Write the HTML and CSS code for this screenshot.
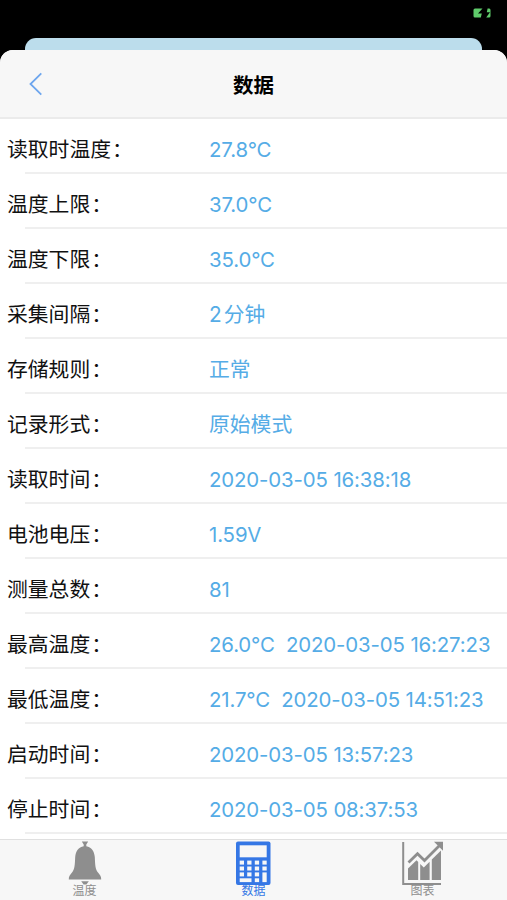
FILE: index.html
```html
<!DOCTYPE html>
<html lang="zh-CN">
<head>
  <meta charset="UTF-8">
  <meta name="viewport" content="width=device-width, initial-scale=1.0">
  <title>数据</title>
  <link rel="stylesheet" href="styles.css">
</head>
<body>
  <!-- Status Bar -->
  <div class="status-bar">
    <svg class="battery" width="18" height="10" viewBox="0 0 18 10" fill="#5fcb6b">
      <path d="M2 0.5H9.5L5 5.6H8.8L7.8 9.5H2Q0.5 9.5 0.5 8V2Q0.5 0.5 2 0.5Z"/>
      <path d="M14.6 0.5H16.2Q17.5 0.5 17.5 2V8Q17.5 9.5 16 9.5H13.2L17 4.2H13.8Z"/>
    </svg>
  </div>

  <!-- Page behind the sheet -->
  <div class="back-sheet"></div>

  <div class="sheet">
    <div class="header">
      <a class="back" href="#">
        <svg width="14" height="24" viewBox="0 0 14 24">
          <path d="M12.3 1.3L1.5 12L12.3 22.7" fill="none" stroke="#6ea6ee" stroke-width="1.8"/>
        </svg>
      </a>
      <h1>数据</h1>
    </div>

    <!-- Data Rows -->
    <div class="list">
      <div class="row"><span class="label">读取时温度<span class="colon">：</span></span><span class="value">27.8°C</span></div>
      <div class="row"><span class="label">温度上限<span class="colon">：</span></span><span class="value">37.0°C</span></div>
      <div class="row"><span class="label">温度下限<span class="colon">：</span></span><span class="value">35.0°C</span></div>
      <div class="row"><span class="label">采集间隔<span class="colon">：</span></span><span class="value text"><span class="count">2</span>分钟</span></div>
      <div class="row"><span class="label">存储规则<span class="colon">：</span></span><span class="value text">正常</span></div>
      <div class="row"><span class="label">记录形式<span class="colon">：</span></span><span class="value text">原始模式</span></div>
      <div class="row"><span class="label">读取时间<span class="colon">：</span></span><span class="value">2020-03-05 16:38:18</span></div>
      <div class="row"><span class="label">电池电压<span class="colon">：</span></span><span class="value">1.59V</span></div>
      <div class="row"><span class="label">测量总数<span class="colon">：</span></span><span class="value">81</span></div>
      <div class="row"><span class="label">最高温度<span class="colon">：</span></span><span class="value">26.0°C&nbsp; 2020-03-05 16:27:23</span></div>
      <div class="row"><span class="label">最低温度<span class="colon">：</span></span><span class="value">21.7°C&nbsp; 2020-03-05 14:51:23</span></div>
      <div class="row"><span class="label">启动时间<span class="colon">：</span></span><span class="value">2020-03-05 13:57:23</span></div>
      <div class="row"><span class="label">停止时间<span class="colon">：</span></span><span class="value">2020-03-05 08:37:53</span></div>
    </div>

    <!-- Tab Bar -->
    <div class="tabs">
      <a class="tab" href="#">
        <svg width="44" height="44" viewBox="0 0 44 44" fill="#8e8e8e">
          <path d="M18.8 0.5H25.2L23.3 3.5V5.2C28.5 6.2 31.3 10 31.8 16C32.2 24 32.2 28 35 31.5C37 34 38.4 35.5 38.2 38.5H5.8C5.6 35.5 7 34 9 31.5C11.8 28 11.8 24 12.2 16C12.7 10 15.5 6.2 20.7 5.2V3.5Z"/>
          <path d="M18.2 40.3H25.8L23.4 43.5H20.6Z"/>
        </svg>
        <span>温度</span>
      </a>
      <a class="tab active" href="#">
        <svg width="44" height="44" viewBox="1 0 44 44">
          <rect x="5" y="0.5" width="34.5" height="43.5" rx="2" fill="#3577e5"/>
          <g fill="#f7f7f7">
            <rect x="8.7" y="4.3" width="27" height="12"/>
            <rect x="8.7" y="19.6" width="4.3" height="4"/>
            <rect x="16.2" y="19.6" width="4.3" height="4"/>
            <rect x="23.8" y="19.6" width="4.3" height="4"/>
            <rect x="31.4" y="19.6" width="4.3" height="4"/>
            <rect x="8.7" y="25.5" width="4.3" height="4"/>
            <rect x="16.2" y="25.5" width="4.3" height="4"/>
            <rect x="23.8" y="25.5" width="4.3" height="4"/>
            <rect x="31.4" y="25.5" width="4.3" height="4"/>
            <rect x="8.7" y="31.4" width="4.3" height="4"/>
            <rect x="16.2" y="31.4" width="4.3" height="4"/>
            <rect x="23.8" y="31.4" width="4.3" height="4"/>
            <rect x="8.7" y="37.3" width="11.8" height="3.8"/>
            <rect x="23.8" y="37.3" width="4.3" height="3.8"/>
            <rect x="31.4" y="31.4" width="4.3" height="9.7"/>
          </g>
        </svg>
        <span>数据</span>
      </a>
      <a class="tab" href="#">
        <svg width="44" height="44" viewBox="1 0 44 44" fill="#8e8e8e">
          <path d="M3.2 1V43H41" fill="none" stroke="#8e8e8e" stroke-width="2"/>
          <path d="M8 39V27.5L16.5 19.2L18.2 21V39Z"/>
          <path d="M20.2 39V23L23.8 26.5L29.6 20.8V39Z"/>
          <path d="M31.8 39V18.6L41 9.6V39Z"/>
          <path d="M8.5 21.5L17.5 12.7L24.5 19.5L39 5" fill="none" stroke="#8e8e8e" stroke-width="2.8"/>
          <path d="M34 0.8H43V9.8Z"/>
        </svg>
        <span>图表</span>
      </a>
    </div>
  </div>
</body>
</html>
```
FILE: styles.css
```css
body {
  margin: 0;
  height: 900px;
  display: flex;
  flex-direction: column;
  overflow: hidden;
  background-color: #000;
  color: #111;
  font-family: Inter, "Noto Sans CJK SC", sans-serif;
}

a {
  text-decoration: none;
}

svg {
  display: block;
}

/* Status Bar */
.status-bar {
  height: 38px;
  box-sizing: border-box;
  padding: 8px 16px 0 0;
  display: flex;
  justify-content: flex-end;
  flex-shrink: 0;
}

.back-sheet {
  height: 12px;
  margin: 0 25px;
  flex-shrink: 0;
  background-color: #bcddec;
  border-radius: 11px 11px 0 0;
}

.sheet {
  flex: 1;
  display: flex;
  flex-direction: column;
  background-color: #fff;
  border-radius: 13px 13px 0 0;
  overflow: hidden;
}

/* Header */
.header {
  height: 69px;
  box-sizing: border-box;
  border-bottom: 2px solid #ebebeb;
  background-color: #f7f7f7;
  display: grid;
  grid-template-columns: 60px 1fr 60px;
  align-items: center;
}

.back {
  padding-left: 29px;
}

.header h1 {
  margin: 0;
  padding-top: 4px;
  font-size: 20.5px;
  font-weight: 600;
  line-height: 30px;
  text-align: center;
  color: #000;
}

/* Data Rows */
.list {
  flex: 1;
}

.row {
  height: 55px;
  box-sizing: border-box;
  padding: 6px 0 0 7px;
  display: flex;
  align-items: center;
  font-size: 20.8px;
  line-height: 30px;
  white-space: nowrap;
  background: linear-gradient(#efefef, #efefef) 25px 100% / 100% 2px no-repeat;
}

.label {
  width: 202px;
  flex-shrink: 0;
}

.colon {
  display: inline-block;
  margin-left: 1px;
}

.value {
  color: #55ace6;
  font-size: 20.4px;
  letter-spacing: -0.13px;
}

.value.text {
  font-size: 20.8px;
  letter-spacing: 0;
}

.count {
  margin-right: 2px;
}

/* Tab Bar */
.tabs {
  height: 61px;
  box-sizing: border-box;
  flex-shrink: 0;
  border-top: 1px solid #e0e0e0;
  background-color: #f7f7f7;
  display: flex;
}

.tab {
  flex: 1;
  display: flex;
  flex-direction: column;
  align-items: center;
  padding-top: 1px;
  color: #8e8e8e;
  font-size: 12px;
  line-height: 12px;
}

.tab.active {
  color: #3577e5;
}
```
